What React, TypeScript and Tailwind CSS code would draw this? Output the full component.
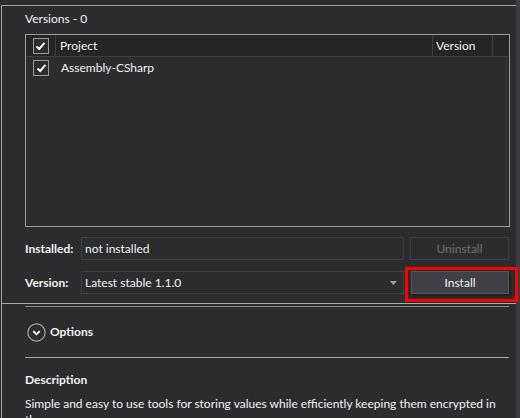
import React from "react";

// NuGet-style package detail pane (dark theme).

function CheckBox() {
  return (
    <div className="flex h-4 w-4 items-center justify-center border border-[#9a9a9a] bg-[#2d2d30]">
      <svg width="11" height="10" viewBox="0 0 11 10">
        <path d="M1.5 5.5 L4.2 8 L9.5 1.8" fill="none" stroke="#ffffff" strokeWidth="2" />
      </svg>
    </div>
  );
}

export default function App() {
  return (
    <div
      className="relative flex h-[418px] w-[520px] overflow-hidden bg-[#2d2d30] text-[12px] text-[#f1f1f1]"
      style={{ fontFamily: "Lato, 'Noto Sans', sans-serif" }}
    >
      <div className="flex w-[516px] shrink-0 flex-col pt-[5px]">
        <div className="ml-px flex flex-1 flex-col border-l border-t border-[#a0a0a0]">
          {/* versions panel */}
          <div className="flex h-[297px] flex-col pl-[23px]">
            <div className="mt-[5px] h-4 leading-4">Versions - 0</div>
            <div className="mt-[7px] flex h-[193px] w-[485px] flex-col border border-[#9a9a9a] bg-[#2d2d30]">
              <div className="flex h-[22px] w-[482px] border-b border-[#3f3f46] bg-[#252526]">
                <div className="flex w-[30px] shrink-0 items-center justify-center border-r border-[#3f3f46]">
                  <CheckBox />
                </div>
                <div className="flex flex-1 items-center pl-[4px]">Project</div>
                <div className="flex w-[61px] shrink-0 items-center border-l border-r border-[#3f3f46] pl-[3px]">
                  Version
                </div>
                <div className="w-[15px] shrink-0" />
              </div>
              <div className="flex h-[22px] items-center">
                <div className="flex w-[30px] shrink-0 items-center justify-center">
                  <CheckBox />
                </div>
                <div className="pl-[5px]">Assembly-CSharp</div>
              </div>
            </div>

            <div className="mt-[10px] flex h-[23px] items-center">
              <div className="w-[56px] shrink-0 font-bold">Installed:</div>
              <div className="flex h-full w-[323px] shrink-0 items-center border border-[#3f3f46] pl-[3px]">
                not installed
              </div>
              <div className="ml-[6px] flex h-full w-[99px] shrink-0 items-center justify-center border border-[#3f3f46] text-[#6d6d6d]">
                Uninstall
              </div>
            </div>

            <div className="mt-[11px] flex h-[23px] items-center">
              <div className="w-[56px] shrink-0 font-bold">Version:</div>
              <div className="flex h-full w-[323px] shrink-0 items-center justify-between border border-[#3f3f46] pl-[3px] pr-[6px]">
                <span>Latest stable 1.1.0</span>
                <svg width="7" height="4" viewBox="0 0 7 4">
                  <path d="M0 0 H7 L3.5 4 Z" fill="#a0a0a0" />
                </svg>
              </div>
              <div className="relative z-10 ml-px mt-[4px] flex h-[35px] w-[113px] shrink-0 items-start justify-start border-[3px] border-[#ff0000] pl-[3px] pt-px">
                <div className="flex h-[23px] w-[98px] shrink-0 items-center justify-center border border-[#555559] bg-[#3f3f46] shadow-[2px_2px_3px_rgba(0,0,0,0.35)]">
                  Install
                </div>
              </div>
            </div>
          </div>

          <div className="-ml-px h-px w-[517px] bg-[#a8a8a8]" />
          <div className="ml-[23px] mt-[2px] h-px w-[484px] bg-[#8a8a8a]" />

          {/* options */}
          <div className="flex h-[50px] items-center pl-[25px]">
            <svg width="19" height="19" viewBox="0 0 19 19">
              <circle cx="9.5" cy="9.5" r="8.6" fill="none" stroke="#a8a8a8" strokeWidth="1.2" />
              <path d="M6.3 8.2 L9.5 11.3 L12.7 8.2" fill="none" stroke="#ffffff" strokeWidth="1.8" />
            </svg>
            <span className="ml-[4px] font-bold">Options</span>
          </div>

          <div className="ml-[23px] h-px w-[484px] bg-[#a8a8a8]" />

          <div className="pl-[23px] pr-[16px]">
            <div className="mt-[14px] h-4 font-bold leading-4">Description</div>
            <p className="mt-[8px] leading-4">
              Simple and easy to use tools for storing values while efficiently keeping them encrypted in
              the memory.
            </p>
          </div>
        </div>
      </div>
      <div className="w-[4px] shrink-0 bg-[#3e3e42]" />
    </div>
  );
}
